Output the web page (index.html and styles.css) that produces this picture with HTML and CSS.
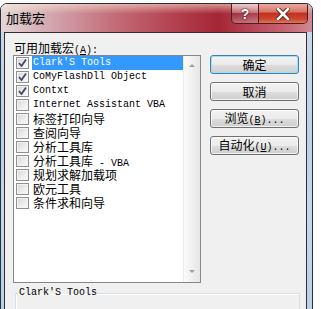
FILE: index.html
```html
<!DOCTYPE html>
<html lang="zh-CN">
<head>
  <meta charset="UTF-8">
  <title>加载宏</title>
  <link rel="stylesheet" href="styles.css">
</head>
<body>

<div class="window">
  <!-- Title bar -->
  <div class="titlebar">
    <span class="title">加载宏</span>
    <div class="caption">
      <span class="cap cap-help">?</span>
      <span class="cap cap-close">
        <svg width="14" height="12" viewBox="0 0 14 12">
          <path d="M2 1 L12 11 M12 1 L2 11" stroke="#5a1a14" stroke-width="4.4" stroke-linecap="square"/>
          <path d="M2 1 L12 11 M12 1 L2 11" stroke="#ffffff" stroke-width="2.6" stroke-linecap="square"/>
        </svg>
      </span>
    </div>
  </div>

  <div class="frame">
    <div class="client">
      <div class="main">
        <div class="left">
          <div class="label">可用加载宏<span class="lat">(<u>A</u>):</span></div>
          <div class="listbox">
            <ul class="items">
              <li class="item selected"><span class="check checked"></span><span class="text lat">Clark'S Tools</span></li>
              <li class="item"><span class="check checked"></span><span class="text lat">CoMyFlashDll Object</span></li>
              <li class="item"><span class="check checked"></span><span class="text lat">Contxt</span></li>
              <li class="item"><span class="check"></span><span class="text lat">Internet Assistant VBA</span></li>
              <li class="item"><span class="check"></span><span class="text">标签打印向导</span></li>
              <li class="item"><span class="check"></span><span class="text">查阅向导</span></li>
              <li class="item"><span class="check"></span><span class="text">分析工具库</span></li>
              <li class="item"><span class="check"></span><span class="text">分析工具库<span class="lat"> - VBA</span></span></li>
              <li class="item"><span class="check"></span><span class="text">规划求解加载项</span></li>
              <li class="item"><span class="check"></span><span class="text">欧元工具</span></li>
              <li class="item"><span class="check"></span><span class="text">条件求和向导</span></li>
            </ul>
            <div class="scrollbar">
              <span class="arrow arrow-up"></span>
              <span class="arrow arrow-down"></span>
            </div>
          </div>
        </div>

        <div class="buttons">
          <button class="btn btn-default">确定</button>
          <button class="btn">取消</button>
          <button class="btn">浏览<span class="lat">(<u>B</u>)...</span></button>
          <button class="btn">自动化<span class="lat">(<u>U</u>)...</span></button>
        </div>
      </div>

      <!-- Description of the selected add-in -->
      <fieldset class="desc">
        <legend class="lat">Clark'S Tools</legend>
      </fieldset>
    </div>
  </div>
</div>

</body>
</html>
```

FILE: styles.css
```css
html, body {
  margin: 0;
  height: 309px;
  overflow: hidden;
  background: #ffffff;
}

body {
  font-family: "Noto Sans CJK SC", "Liberation Sans", sans-serif;
  font-size: 12px;
  color: #000;
}

/* Latin parts use a narrow monospace like the SimSun ASCII glyphs */
.lat {
  font-family: "Liberation Mono", "DejaVu Sans Mono", monospace;
  font-size: 10px;
}

.window {
  margin-top: 3px;
  width: 311px;
  height: 340px;
  border: 1px solid #2b2f3a;
  border-radius: 7px 7px 0 0;
  overflow: hidden;
  background: linear-gradient(to bottom, #c9d9ea 0%, #b9d2ea 40%, #c2d8ee 60%, #b4cfe8 100%);
}

/* Aero style red glass title bar */
.titlebar {
  height: 28px;
  display: flex;
  align-items: center;
  padding-left: 5px;
  background:
    linear-gradient(to bottom, rgba(255, 240, 215, 0.55) 0%, rgba(255, 240, 215, 0) 35%),
    linear-gradient(to right, #e4d6d8 0%, #d6b2b8 12%, #c4707c 35%, #b44250 55%, #a42634 70%, #b54454 80%, #c86674 92%, #d08a94 100%);
}

.title {
  font-size: 13px;
  line-height: 16px;
  color: #000;
}

.caption {
  margin-left: auto;
  margin-right: 4px;
  align-self: flex-start;
  display: flex;
  height: 19px;
  border: 1px solid #4a1e22;
  border-top: none;
  border-radius: 0 0 5px 5px;
  overflow: hidden;
}

.cap {
  display: flex;
  align-items: center;
  justify-content: center;
  height: 19px;
}

.cap-help {
  width: 26px;
  border-right: 1px solid #4a1e22;
  background: linear-gradient(to bottom, rgba(255, 255, 255, 0.45) 0%, rgba(255, 255, 255, 0.2) 45%, rgba(120, 40, 50, 0.25) 50%, rgba(255, 255, 255, 0.25) 100%);
  font-family: "Liberation Sans", sans-serif;
  font-weight: bold;
  font-size: 14px;
  color: #fff;
  text-shadow: 0 0 2px #3a1010, 0 0 1px #3a1010;
}

.cap-close {
  width: 48px;
  background: linear-gradient(to bottom, #e7aaa0 0%, #d8786a 40%, #c2321f 50%, #cc4630 80%, #dc7a5a 100%);
}

.frame {
  padding: 0 5px 0 3px;
}

.client {
  height: 320px;
  border: 1px solid #3a2a30;
  background: #f0f0f0;
  padding: 7px 0 0 8px;
}

.main {
  display: flex;
  gap: 9px;
}

.label {
  height: 15px;
  line-height: 15px;
  padding-left: 1px;
}

.listbox {
  display: flex;
  width: 186px;
  height: 226px;
  border: 1px solid #828790;
  background: #fff;
}

.items {
  flex: 1;
  list-style: none;
  margin: 0;
  padding: 0;
}

.item {
  display: flex;
  align-items: center;
  height: 14px;
  line-height: 14px;
  white-space: nowrap;
}

.check {
  box-sizing: border-box;
  width: 13px;
  height: 12px;
  margin: 0 3px 0 2px;
  border: 1px solid #8e8f8f;
  background: linear-gradient(135deg, #d6d6d6 0%, #eeeeee 60%, #fbfbfb 100%);
  box-shadow: inset 0 0 0 1px #f4f4f4;
}

.check.checked {
  background:
    url("data:image/svg+xml,%3Csvg xmlns='http://www.w3.org/2000/svg' width='11' height='10'%3E%3Cpath d='M2 5 L4.5 8 L9 1.5' fill='none' stroke='%23404a66' stroke-width='1.8'/%3E%3C/svg%3E") center no-repeat,
    linear-gradient(135deg, #d6d6d6 0%, #eeeeee 60%, #fbfbfb 100%);
}

.text {
  flex: 1;
  height: 14px;
  padding-left: 1px;
}

.selected .text {
  background: #3399ff;
  color: #fff;
}

.scrollbar {
  width: 17px;
  display: flex;
  flex-direction: column;
  justify-content: space-between;
  align-items: center;
  padding: 8px 0 9px;
  box-sizing: border-box;
  border-left: 1px solid #ececec;
  background: linear-gradient(to right, #fbfbfb 0%, #f0f0f0 50%, #e6e6e6 100%);
}

.arrow {
  width: 0;
  height: 0;
  border-left: 3px solid transparent;
  border-right: 3px solid transparent;
}

.arrow-up {
  border-bottom: 3px solid #a0a0a0;
}

.arrow-down {
  border-top: 3px solid #a0a0a0;
}

.buttons {
  margin-top: 15px;
  display: flex;
  flex-direction: column;
  gap: 8px;
}

.btn {
  width: 89px;
  height: 19px;
  padding: 0;
  font-family: "Noto Sans CJK SC", "Liberation Sans", sans-serif;
  font-size: 12px;
  line-height: 15px;
  color: #000;
  border: 1px solid #707070;
  border-radius: 3px;
  background: linear-gradient(to bottom, #f2f2f2 0%, #ebebeb 50%, #dddddd 51%, #cfcfcf 100%);
  box-shadow: inset 0 0 0 1px rgba(255, 255, 255, 0.7);
}

.btn-default {
  border-color: #3c7fb1;
  box-shadow: inset 0 0 0 1px #a8dcf4;
}

.desc {
  margin: 4px 0 0 2px;
  width: 279px;
  height: 60px;
  padding: 0 2px;
  border: 1px solid #d5dfe5;
  box-shadow: inset 1px 1px 0 #fff;
}

.desc legend {
  padding: 0 1px;
  line-height: 12px;
}
```
